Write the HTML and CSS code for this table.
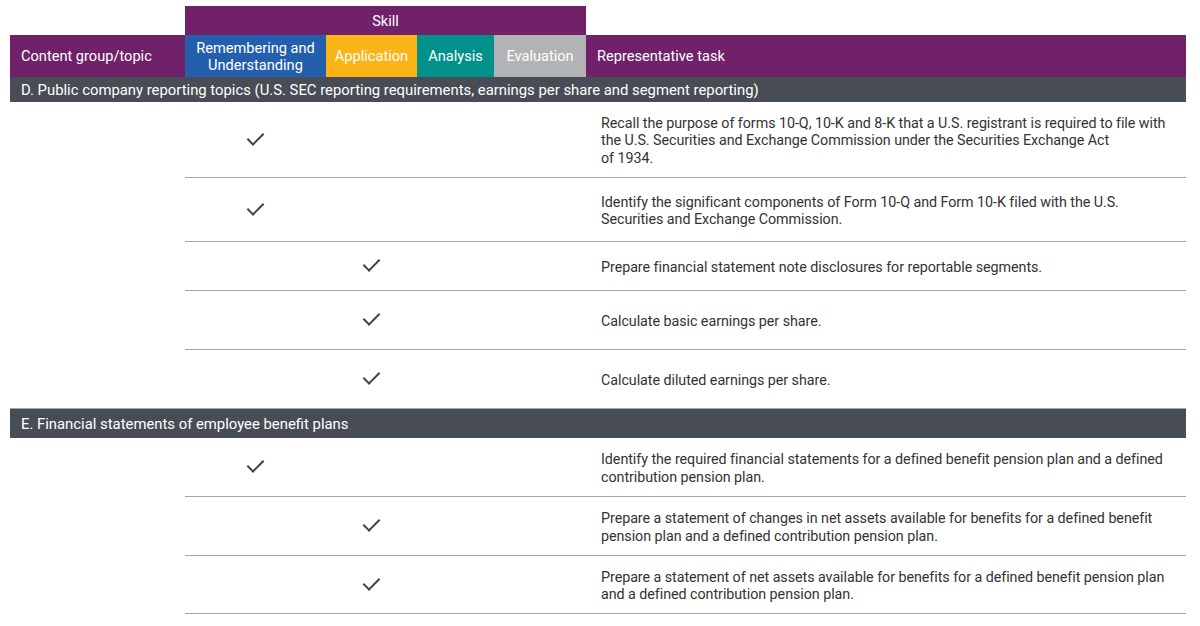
FILE: index.html
```html
<!DOCTYPE html>
<html>
<head>
<meta charset="utf-8">
<link rel="stylesheet" href="styles.css">
</head>
<body>
<div class="table">
  <div class="skill-row">
    <div class="skill-spacer"></div>
    <div class="skill-head">Skill</div>
  </div>
  <div class="head-row">
    <div class="hc c-topic">Content group/topic</div>
    <div class="hc c-rem bg-blue">Remembering and<br>Understanding</div>
    <div class="hc c-app bg-yellow">Application</div>
    <div class="hc c-ana bg-teal">Analysis</div>
    <div class="hc c-eva bg-gray">Evaluation</div>
    <div class="hc c-task">Representative task</div>
  </div>

  <div class="section sec-d">D. Public company reporting topics (U.S. SEC reporting requirements, earnings per share and segment reporting)</div>

  <div class="row h76">
    <div class="spacer"></div>
    <div class="cells">
      <div class="cell c-rem"><span class="check"></span></div>
      <div class="cell c-app"></div>
      <div class="cell c-ana"></div>
      <div class="cell c-eva"></div>
      <div class="cell c-task">Recall the purpose of forms 10-Q, 10-K and 8-K that a U.S. registrant is required to file with the U.S. Securities and Exchange Commission under the Securities Exchange Act<br>of 1934.</div>
    </div>
  </div>
  <div class="row h64">
    <div class="spacer"></div>
    <div class="cells">
      <div class="cell c-rem"><span class="check"></span></div>
      <div class="cell c-app"></div>
      <div class="cell c-ana"></div>
      <div class="cell c-eva"></div>
      <div class="cell c-task">Identify the significant components of Form 10-Q and Form 10-K filed with the U.S.<br>Securities and Exchange Commission.</div>
    </div>
  </div>
  <div class="row h49">
    <div class="spacer"></div>
    <div class="cells">
      <div class="cell c-rem"></div>
      <div class="cell c-app"><span class="check"></span></div>
      <div class="cell c-ana"></div>
      <div class="cell c-eva"></div>
      <div class="cell c-task">Prepare financial statement note disclosures for reportable segments.</div>
    </div>
  </div>
  <div class="row h59">
    <div class="spacer"></div>
    <div class="cells">
      <div class="cell c-rem"></div>
      <div class="cell c-app"><span class="check"></span></div>
      <div class="cell c-ana"></div>
      <div class="cell c-eva"></div>
      <div class="cell c-task">Calculate basic earnings per share.</div>
    </div>
  </div>
  <div class="row h58 full-line">
    <div class="spacer"></div>
    <div class="cells">
      <div class="cell c-rem"></div>
      <div class="cell c-app"><span class="check"></span></div>
      <div class="cell c-ana"></div>
      <div class="cell c-eva"></div>
      <div class="cell c-task">Calculate diluted earnings per share.</div>
    </div>
  </div>

  <div class="section sec-e">E. Financial statements of employee benefit plans</div>

  <div class="row h59">
    <div class="spacer"></div>
    <div class="cells">
      <div class="cell c-rem"><span class="check"></span></div>
      <div class="cell c-app"></div>
      <div class="cell c-ana"></div>
      <div class="cell c-eva"></div>
      <div class="cell c-task">Identify the required financial statements for a defined benefit pension plan and a defined contribution pension plan.</div>
    </div>
  </div>
  <div class="row h59">
    <div class="spacer"></div>
    <div class="cells">
      <div class="cell c-rem"></div>
      <div class="cell c-app"><span class="check"></span></div>
      <div class="cell c-ana"></div>
      <div class="cell c-eva"></div>
      <div class="cell c-task">Prepare a statement of changes in net assets available for benefits for a defined benefit pension plan and a defined contribution pension plan.</div>
    </div>
  </div>
  <div class="row h58 full-line">
    <div class="spacer"></div>
    <div class="cells">
      <div class="cell c-rem"></div>
      <div class="cell c-app"><span class="check"></span></div>
      <div class="cell c-ana"></div>
      <div class="cell c-eva"></div>
      <div class="cell c-task">Prepare a statement of net assets available for benefits for a defined benefit pension plan and a defined contribution pension plan.</div>
    </div>
  </div>
</div>
</body>
</html>
```

FILE: styles.css
```css
* { box-sizing: border-box; }
html, body { margin: 0; padding: 0; background: #fff; }
body {
  font-family: Roboto, "Liberation Sans", sans-serif;
  font-size: 14.6px;
  color: #333;
}
.table {
  width: 1176px;
  margin: 6px 0 0 10px;
}
.skill-row { display: flex; height: 29px; }
.skill-spacer { width: 175px; }
.skill-head {
  width: 401px;
  background: #71206a;
  color: #fff;
  display: flex;
  align-items: center;
  justify-content: center;
}
.head-row { display: flex; height: 42px; background: #71206a; }
.hc {
  color: #fff;
  display: flex;
  align-items: center;
  justify-content: center;
  text-align: center;
  line-height: 17.5px;
  padding-top: 2px;
}
.c-topic { width: 175px; justify-content: flex-start; padding-left: 11px; }
.c-rem { width: 141px; }
.c-app { width: 91px; }
.c-ana { width: 77px; }
.c-eva { width: 92px; }
.c-task { flex: 1; }
.hc.c-task { justify-content: flex-start; padding-left: 11px; }
.bg-blue { background: #245fae; }
.bg-yellow { background: #fbb415; }
.bg-teal { background: #00928a; }
.bg-gray { background: #b2b3b4; }

.section {
  background: #474c55;
  color: #fff;
  font-size: 14.85px;
  padding: 1px 0 0 11px;
  display: flex;
  align-items: center;
}
.sec-d { height: 25px; }
.sec-e { height: 30px; border-top: 1px solid #a5a5a5; }

.row { display: flex; }
.spacer { width: 175px; }
.cells {
  flex: 1;
  display: flex;
  border-bottom: 1px solid #a5a5a5;
}
.full-line .cells { border-bottom: 0; }
.row.full-line:last-child .cells { border-bottom: 1px solid #a5a5a5; }
.cell {
  display: flex;
  align-items: center;
  justify-content: center;
}
.cell.c-task {
  justify-content: flex-start;
  padding: 3px 10px 0 15px;
  font-size: 14.3px;
  line-height: 17.5px;
  letter-spacing: -0.05px;
  color: #333;
}
.h76 { height: 76px; }
.h64 { height: 64px; }
.h49 { height: 49px; }
.h59 { height: 59px; }
.h58 { height: 58px; }

.check {
  display: block;
  width: 9px;
  height: 16px;
  border-right: 2px solid #3f4147;
  border-bottom: 2px solid #3f4147;
  transform: rotate(45deg);
  margin-top: -6px;
}
```
